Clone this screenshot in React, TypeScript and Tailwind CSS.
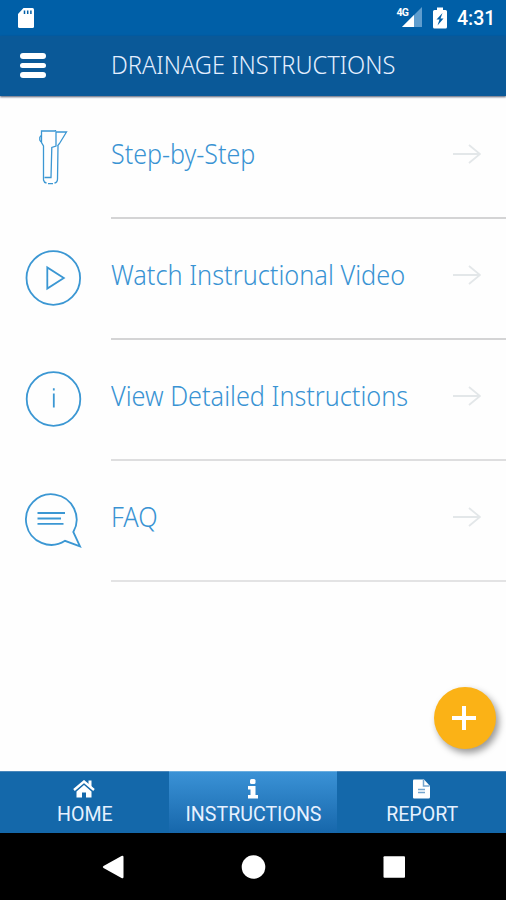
import type { ReactNode } from 'react';

const LABEL_FONT = "font-['Noto_Sans','Open_Sans',sans-serif]";

function StatusBar() {
  return (
    <div className="flex h-9 items-center bg-[#005fa7] pl-[17px] pr-[11px] text-white">
      <svg width="18" height="22" viewBox="0 0 18 22" className="-mt-px">
        <path d="M6.500 1H15.500Q17 1 17 2.500V19.500Q17 21 15.500 21H2.500Q1 21 1 19.500V7Z" fill="currentColor" />
        <path d="M7.500 3.500V7M10.700 3.500V7M13.900 3.500V7" stroke="#005fa7" strokeWidth="1.500" />
      </svg>
      <div className="ml-auto flex items-center">
        <svg width="27" height="22" viewBox="0 0 27 22" className="-mt-0.5">
          <path d="M26 1V21H6Z" fill="#5f9dce" />
          <path d="M18 9V21H6Z" fill="currentColor" />
          <rect x="0" y="0" width="14" height="11" fill="#005fa7" />
          <text x="0.500" y="9.500" fontFamily="Roboto, sans-serif" fontWeight="700" fontSize="10.500" textLength="12.500" fill="currentColor">4G</text>
        </svg>
        <svg width="14" height="22" viewBox="0 0 14 22" className="ml-[10px] -mt-px">
          <path d="M4 0.500H10V3H12.500Q14 3 14 4.500V20Q14 21.500 12.500 21.500H1.500Q0 21.500 0 20V4.500Q0 3 1.500 3H4Z" fill="currentColor" />
          <path d="M9.500 6L3.500 12.500H6.500L4.500 18.500L10.500 11.500H7.500Z" fill="#005fa7" />
        </svg>
        <span className="ml-[10px] block w-[38px] whitespace-nowrap pt-px font-['Roboto',sans-serif] text-[19.500px] font-medium leading-none">4:31</span>
      </div>
    </div>
  );
}

function Header() {
  return (
    <header className="relative z-10 flex h-[60px] items-center bg-[#0a5998] pb-px pl-5 shadow-[0_1px_2px_rgba(20,30,60,0.75)]">
      <button aria-label="Menu" className="flex w-[91px] flex-col gap-1">
        <span className="h-[5.500px] w-[26px] rounded-full bg-white" />
        <span className="h-[5.500px] w-[26px] rounded-full bg-white" />
        <span className="h-[5.500px] w-[26px] rounded-full bg-white" />
      </button>
      <h1 className={`${LABEL_FONT} origin-left scale-x-[0.927] whitespace-nowrap pb-px text-[25.500px] font-[350] leading-none text-[#e4efff]`}>
        DRAINAGE INSTRUCTIONS
      </h1>
    </header>
  );
}

const lineArt = {
  width: 60,
  height: 60,
  viewBox: '0 0 60 60',
  fill: 'none',
  stroke: '#3b97d3',
  strokeWidth: 1.8,
} as const;

const DrainIcon = () => (
  <svg {...lineArt} strokeWidth="1.300" className="-mt-0.5 overflow-visible">
    <path d="M18.500 17V5H32.500V4M33 6L43.500 6L36.500 17.500L34.500 20M18.500 5V16.500L20.500 20V54Q21 56.500 23.500 57M25 57.700H30M31.500 57Q34.500 56.500 34.500 53L35 20" />
    <path d="M33 6V20L28.800 21.500L28 51.500H21.500" />
    <path d="M18 9.500L16.800 11.500V14L18 16" />
  </svg>
);

const PlayIcon = () => (
  <svg {...lineArt} className="-mt-px">
    <circle cx="30.300" cy="30" r="26.800" />
    <path d="M24.300 19.500V40.500L40.800 30Z" />
  </svg>
);

const InfoIcon = () => (
  <svg {...lineArt} className="-mt-px">
    <circle cx="30.500" cy="30" r="26.800" />
    <path d="M30.800 24.500V38.500M30.800 19.200V21.500" />
  </svg>
);

const ChatIcon = () => (
  <svg {...lineArt} className="-mt-px">
    <path d="M42 50.800A25.300 25.300 0 1 1 50.300 42L57 56.300Z" />
    <path d="M14.500 23H42M14.500 28.500H38M14.500 33.800H40.500" />
  </svg>
);

function Row({ icon, label, width, line }: { icon: ReactNode; label: string; width: string; line: string }) {
  return (
    <li className="flex h-[121px]">
      <div className="w-[111px] pl-[23px] pt-[30px]">{icon}</div>
      <div className={`flex flex-1 items-start justify-between border-b-[2px] pr-[25px] ${line}`}>
        <span className={`${LABEL_FONT} ${width} origin-left whitespace-nowrap pt-[41px] text-[27.500px] font-light leading-[30px] text-[#3993d3]`}>
          {label}
        </span>
        <svg width="28" height="20" viewBox="0 0 28 20" fill="none" stroke="#e3e7e9" strokeWidth="1.800" className="mt-[46px] shrink-0">
          <path d="M0 10H27M16 1L27 10L16 19" />
        </svg>
      </div>
    </li>
  );
}

function Tab({ icon, label, active }: { icon: ReactNode; label: string; active?: boolean }) {
  return (
    <button
      className={`flex flex-1 flex-col items-center border-t pt-[7px] text-white ${
        active ? 'border-[#6aaee0] bg-linear-to-b from-[#3a92d6] to-[#1667ab]' : 'border-[#4a87bb] bg-[#1468aa]'
      }`}
    >
      <span className="flex h-5 items-center">{icon}</span>
      <span className="mt-[3px] whitespace-nowrap pl-px font-['Roboto',sans-serif] text-[19.600px] leading-[25px] text-[#e6f1ff]">{label}</span>
    </button>
  );
}

export default function App() {
  return (
    <div className="flex h-[900px] w-[506px] flex-col overflow-hidden bg-white">
      <StatusBar />
      <Header />
      <main className="relative flex-1 bg-[#fefefe] pt-[1.500px]">
        <ul>
          <Row icon={<DrainIcon />} label="Step-by-Step" width="scale-x-[0.91]" line="border-[#d4d4d5]" />
          <Row icon={<PlayIcon />} label="Watch Instructional Video" width="scale-x-[0.921]" line="border-[#d4d4d5]" />
          <Row icon={<InfoIcon />} label="View Detailed Instructions" width="scale-x-[0.918]" line="border-[#dededf]" />
          <Row icon={<ChatIcon />} label="FAQ" width="scale-x-[0.92]" line="border-[#e3e3e4]" />
        </ul>
        <button
          aria-label="Add"
          className="absolute bottom-[22px] right-[10px] flex size-[62px] items-center justify-center rounded-full bg-[#fbb216] shadow-[3px_4px_7px_rgba(0,0,0,0.4)]"
        >
          <svg width="24" height="24" viewBox="0 0 24 24" stroke="white" strokeWidth="4" className="mr-0.5 mb-px">
            <path d="M12 0V24M0 12H24" />
          </svg>
        </button>
      </main>
      <nav className="flex h-[62px]">
        <Tab
          label="HOME"
          icon={
            <svg width="22" height="18" viewBox="0 0 22 18" fill="currentColor">
              <path d="M11 5L18.500 11.500V17.500H13V12.500H9V17.500H3.500V11.500Z" />
              <path d="M1 10L11 1.500L21 10" fill="none" stroke="currentColor" strokeWidth="2.400" />
              <path d="M15.500 0.500H18.500V8L15.500 5Z" />
            </svg>
          }
        />
        <Tab
          active
          label="INSTRUCTIONS"
          icon={
            <svg width="12" height="20" viewBox="0 0 12 20" fill="currentColor">
              <rect x="3" y="0" width="5.500" height="5" rx="1.500" />
              <path d="M1 7H8.500V16H11V19.500H1V16H3.500V10.500H1Z" />
            </svg>
          }
        />
        <Tab
          label="REPORT"
          icon={
            <svg width="17" height="20" viewBox="0 0 17 20" fill="currentColor">
              <path d="M1 0.500H11L17 7V18Q17 19.500 15.500 19.500H1Q0 19.500 0 18.500V1.500Q0 0.500 1 0.500Z" />
              <path d="M10.500 1V7H16.500M5 10.500H12M5 13.500H12" fill="none" stroke="#75a6cf" strokeWidth="1.500" />
            </svg>
          }
        />
      </nav>
      <div className="flex h-[67px] items-center justify-center bg-black">
        <svg width="506" height="28" viewBox="0 0 506 28" fill="white">
          <path d="M121.500 3Q123.500 2 123.500 4V24Q123.500 26 121.500 25L103.500 15Q102 14 103.500 13Z" />
          <circle cx="253.500" cy="14" r="11.800" />
          <rect x="383.500" y="3.200" width="21.500" height="21.500" rx="1" />
        </svg>
      </div>
    </div>
  );
}
